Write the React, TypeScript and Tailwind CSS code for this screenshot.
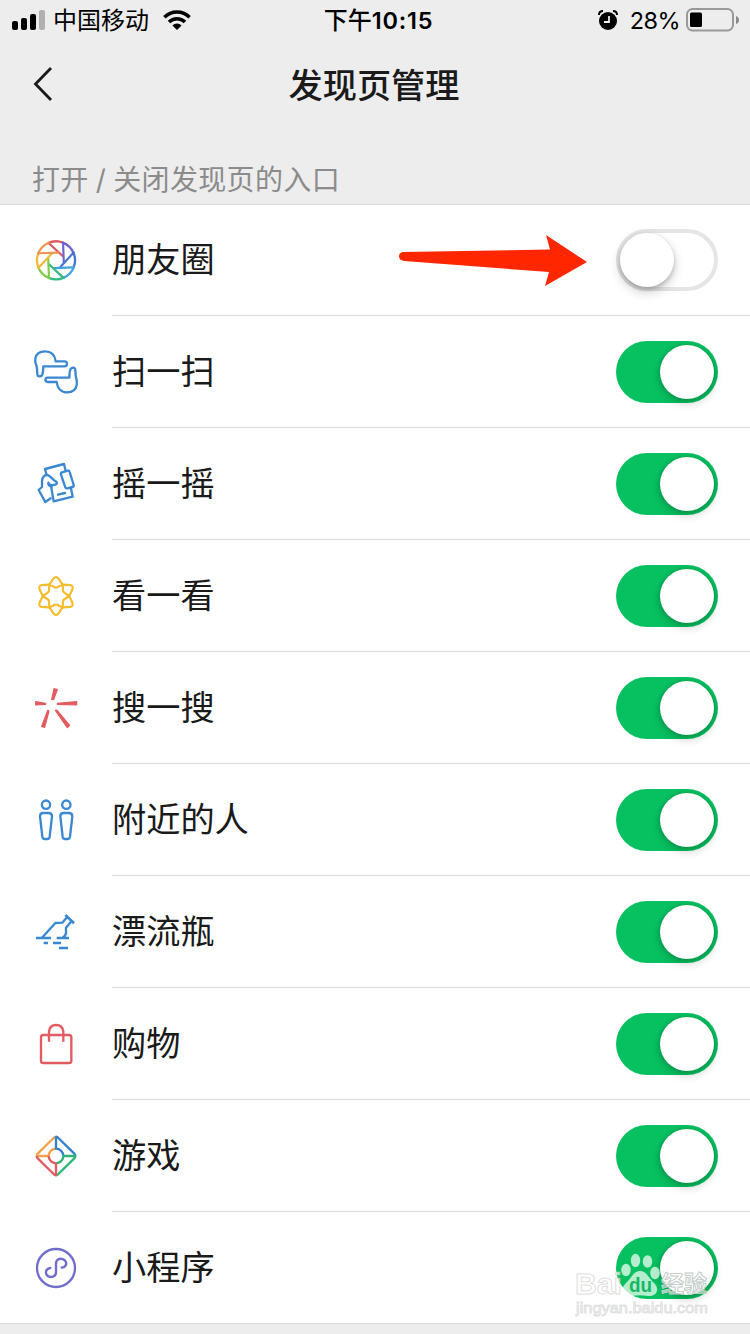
import type { ReactNode } from "react";

const BLUE = "#3a87d2";
const RED = "#e25b60";
const YELLOW = "#f5bd2b";

function Glyph({ top = 0, color = BLUE, children }: { top?: number; color?: string; children: ReactNode }) {
  return (
    <svg
      className="h-20 w-20 shrink-0"
      viewBox={`0 ${top} 240 240`}
      fill="none"
      stroke={color}
      strokeWidth={7}
      strokeLinecap="round"
      strokeLinejoin="round"
    >
      {children}
    </svg>
  );
}

const apertureColors = ["#dd5a62", "#6f63cf", "#4673cf", "#3fa4e0", "#35b985", "#7fcb45", "#f0b93a", "#ef9350"];

function MomentsIcon() {
  return (
    <Glyph top={2}>
      {apertureColors.map((c, i) => (
        <g key={c} stroke={c} transform={`rotate(${i * 45} 108 120)`}>
          <path d="M84.5 68 A57 57 0 0 1 129.8 67.3" />
          <path d="M87 69 L128 107" strokeWidth={6.5} />
        </g>
      ))}
    </Glyph>
  );
}

function ScanIcon() {
  return (
    <Glyph top={-9}>
      <path d="M53 122 C50 114 53 101 49 91 C45 82 45 75 46 70 C49 55 60 49 75 49 C95 49 105 61 107 79 L134 79 C143 79 143 94 134 94 L70 94 C69 101 71 113 66 121 C62 125 56 125 53 122 Z" />
      <path d="M165 101 C168 111 165 119 169 131 C171 137 171 143 170 151 C167 166 156 172 142 172 C124 172 112 160 110 141 L83 141 C74 141 74 128 83 128 L148 128 C149 119 147 110 152 102 C156 97 162 97 165 101 Z" />
    </Glyph>
  );
}

function ShakeIcon() {
  return (
    <Glyph top={327}>
      <path d="M79 418 L75 402 L132 387 L137 407" />
      <path d="M124 413 L143 407 Q148 406 149 411 L161 450 Q162 455 157 456 L142 460 Q137 461 136 457 L123 419 Q122 414 124 413 Z" />
      <path d="M95 455 C88 453 84 448 85 443 C88 449 97 452 106 449 C112 447 112 442 107 439 C99 434 92 424 83 420 C72 419 66 428 66 440 L66 456 L56 465 L76 501 L92 490" />
      <path d="M94 458 L101 499 L158 485 L153 460" />
      <path d="M114 479 L135 474" />
    </Glyph>
  );
}

function TopStoriesIcon() {
  return (
    <Glyph top={-12} color={YELLOW}>
      {[0, 60, 120, 180, 240, 300].map((a) => (
        <g key={a} transform={`rotate(${a} 108 108)`}>
          <path d="M88 74 L101 55 Q108 47 115 55 L128 74 Q119 77 113 81 Q108 84 103 81 Q97 77 88 74 Z" strokeWidth={6.5} />
        </g>
      ))}
    </Glyph>
  );
}

function SearchIcon() {
  return (
    <Glyph top={324} color={RED}>
      <g fill={RED} strokeWidth={3.5}>
        <path d="M102 386 L112 389 L101 419 L95 418 Z" />
        <path d="M47 425 L77 430 L77 433 L47 435 Z" />
        <path d="M112 430 L170 425 L170 435 L112 433 Z" />
        <path d="M83 451 L87 453 L74 502 L65 499 Z" />
        <path d="M106 451 L110 450 L149 496 L142 503 Z" />
      </g>
    </Glyph>
  );
}

function NearbyIcon() {
  return (
    <Glyph top={-15}>
      {[0, 61].map((dx) => (
        <g key={dx} transform={`translate(${dx} 0)`}>
          <circle cx={78} cy={59} r={12.5} />
          <path d="M68 84 H87 Q96 85 96 94 L89 155 Q88 162 82 162 H74 Q68 162 67 155 L60 94 Q60 85 68 84 Z" />
        </g>
      ))}
    </Glyph>
  );
}

function BottleIcon() {
  return (
    <Glyph top={321}>
      <g strokeLinecap="butt">
        <path d="M48 459 H93 M110 459 H147 M71 474 H84 M99 474 H123 M117 489 H144" strokeWidth={7} />
        <path d="M66 458 L106 414 L127 413 L141 397 M153 410 L138 428 V444 Q137 453 128 458" />
        <path d="M136 390 L162 415" strokeWidth={8} />
      </g>
    </Glyph>
  );
}

function ShoppingIcon() {
  return (
    <Glyph top={-18} color={RED}>
      <rect x={63} y={75} width={91} height={84} rx={7} />
      <path d="M87 95 V65 Q89 45 108 45 Q128 45 130 65 V95" strokeLinecap="butt" />
    </Glyph>
  );
}

function GamesIcon() {
  return (
    <Glyph top={318}>
      <g strokeLinecap="butt">
        <path d="M51 438 Q50 434 53 431 L101 384 Q105 380 108 380" stroke="#f0a14a" />
        <path d="M50 438 H86 A22 22 0 0 1 108 416" stroke="#f0a14a" />
        <path d="M108 380 Q112 380 115 384 L163 431 Q166 434 166 438" stroke="#3380cf" />
        <path d="M108 379 V416 A22 22 0 0 1 130 438" stroke="#3380cf" />
        <path d="M166 438 Q166 442 163 445 L115 492 Q112 496 108 496" stroke="#2db678" />
        <path d="M168 438 H130 A22 22 0 0 1 108 460" stroke="#2db678" />
        <path d="M108 496 Q104 496 101 492 L53 445 Q50 442 50 438" stroke={RED} />
        <path d="M108 497 V460 A22 22 0 0 1 86 438" stroke={RED} />
      </g>
    </Glyph>
  );
}

function MiniProgramIcon() {
  return (
    <Glyph top={-6} color="#716dcd">
      <circle cx={108} cy={114} r={57} />
      <path d="M125 113 C136 112 140 104 138 97 C135 87 123 84 115 88 C110 91 108 95 108 101 V127 C108 133 105 138 99 140 C90 143 79 138 78 129 C77 121 82 115 91 114" />
    </Glyph>
  );
}

const rows: { label: string; icon: ReactNode; on: boolean }[] = [
  { label: "朋友圈", icon: <MomentsIcon />, on: false },
  { label: "扫一扫", icon: <ScanIcon />, on: true },
  { label: "摇一摇", icon: <ShakeIcon />, on: true },
  { label: "看一看", icon: <TopStoriesIcon />, on: true },
  { label: "搜一搜", icon: <SearchIcon />, on: true },
  { label: "附近的人", icon: <NearbyIcon />, on: true },
  { label: "漂流瓶", icon: <BottleIcon />, on: true },
  { label: "购物", icon: <ShoppingIcon />, on: true },
  { label: "游戏", icon: <GamesIcon />, on: true },
  { label: "小程序", icon: <MiniProgramIcon />, on: true },
];

function Toggle({ on }: { on: boolean }) {
  return (
    <div
      role="switch"
      aria-checked={on}
      className={
        on
          ? "flex h-[62px] w-[102px] items-center justify-end rounded-full bg-[#07c160] p-1"
          : "flex h-[62px] w-[102px] items-center rounded-full border-4 border-[#e5e5e5] bg-white"
      }
    >
      <div
        className={
          on
            ? "h-[54px] w-[54px] rounded-full bg-white shadow-[0_4px_10px_rgba(0,0,0,0.2),0_0_4px_rgba(0,0,0,0.18)]"
            : "h-[54px] w-[54px] rounded-full bg-white shadow-[0_5px_12px_rgba(0,0,0,0.2),0_2px_4px_rgba(0,0,0,0.2)]"
        }
      />
    </div>
  );
}

function StatusBar() {
  return (
    <div className="grid h-10 grid-cols-3 items-center text-black">
      <div className="flex items-center pl-3">
        <svg className="h-5 w-[34px]" viewBox="0 0 34 20">
          <rect x="0" y="11" width="6" height="9" rx="2" />
          <rect x="9" y="8" width="6" height="12" rx="2" />
          <rect x="18" y="4" width="6" height="16" rx="2" />
          <rect x="27" y="0" width="6" height="20" rx="2" fill="#b0b0b0" />
        </svg>
        <span className="ml-[7px] pt-[2px] text-2xl leading-[38px] whitespace-nowrap">中国移动</span>
        <svg className="ml-[14px] h-5 w-7" viewBox="0 0 28 20" fill="none" stroke="#000" strokeWidth={3.6}>
          <path d="M1.4 7.2 A17.8 17.8 0 0 1 26.6 7.2" />
          <path d="M6 12 A11.4 11.4 0 0 1 22 12" />
          <path d="M14 20 L9.4 15.4 A6.5 6.5 0 0 1 18.6 15.4 Z" fill="#000" stroke="none" />
        </svg>
      </div>
      <div className="flex items-center justify-center pt-[2px] pl-[7px] whitespace-nowrap">
        <span className="text-2xl leading-[38px] font-medium">下午</span>
        <span className="text-[23.5px] leading-[38px] font-semibold tracking-[0.8px]">10:15</span>
      </div>
      <div className="flex items-center justify-end pr-[11px]">
        <svg className="h-5 w-5" viewBox="0 0 20 20">
          <circle cx="10" cy="11" r="9" />
          <path d="M1 5 Q1 1 5 1 M15 1 Q19 1 19 5" fill="none" stroke="#000" strokeWidth={2} />
          <path d="M11 6 V12 H6" fill="none" stroke="#ededed" strokeWidth={1.8} />
        </svg>
        <span className="ml-3 pt-[2px] text-[23.5px] leading-[38px] tracking-[-0.6px]">28%</span>
        <svg className="ml-[6px] h-6 w-[53px]" viewBox="0 0 53 24">
          <rect x="1" y="1" width="46" height="21.5" rx="5.5" fill="none" stroke="#999" strokeWidth={2} />
          <rect x="4" y="4.5" width="12" height="14.5" rx="1.5" />
          <path d="M50 8 Q53 9 53 12 Q53 15 50 16 Z" fill="#8a8a8a" />
        </svg>
      </div>
    </div>
  );
}

function Arrow() {
  return (
    <svg className="mt-[2px] mr-[27px] h-[52px] w-[190px]" viewBox="0 0 190 52">
      <path
        d="M4 17 L151 14.5 L147 0 L188 27 L146 51 L150 37 L5 26 Q0 25 0 21.5 Q0 17.5 4 17 Z"
        fill="#ff2600"
      />
    </svg>
  );
}

function Watermark() {
  return (
    <svg
      className="absolute right-[34px] bottom-[10px] h-[76px] w-[144px]"
      viewBox="0 0 144 76"
      fill="#ffffff"
      fillOpacity={0.7}
      stroke="#bdbdbd"
      strokeOpacity={0.5}
      strokeWidth={1}
    >
      <g stroke="none">
        <ellipse cx="54" cy="22" rx="4.7" ry="6.2" />
        <ellipse cx="63.5" cy="12.5" rx="4.7" ry="6.7" />
        <ellipse cx="75.5" cy="13.5" rx="4.7" ry="6.2" />
        <ellipse cx="83" cy="25" rx="4.8" ry="6.2" />
        <path d="M68 23 C75 23 77 31 83 36 C88 42 84 49 76 48 C70 47 65 47 60 48 C51 49 47 42 54 35 C60 30 61 23 68 23 Z" />
      </g>
      <g fontFamily="Liberation Sans" fontWeight="700">
        <text x="3" y="46" fontSize="29" textLength="47" lengthAdjust="spacingAndGlyphs">Bai</text>
        <text x="57" y="44" fontSize="20" fill="#16b862" fillOpacity={1} stroke="none" textLength="23" lengthAdjust="spacingAndGlyphs">du</text>
      </g>
      <text x="89" y="44" fontSize="23" fontWeight="700" fontFamily="Noto Sans CJK SC" fillOpacity={0.55} stroke="#c4cdc8" strokeOpacity={1}>经验</text>
      <text x="4" y="65" fontSize="14.5" fontFamily="Liberation Sans" stroke="#b5b5b5" strokeOpacity={0.42} textLength="132" lengthAdjust="spacingAndGlyphs">jingyan.baidu.com</text>
    </svg>
  );
}

export default function App() {
  return (
    <main className="relative flex h-[1334px] w-[750px] flex-col overflow-hidden bg-[#ededed] font-['Inter','Noto_Sans_CJK_SC',sans-serif] text-[#1a1a1a]">
      <StatusBar />
      <header className="grid h-[88px] grid-cols-3 items-center">
        <svg className="ml-[32px] h-9 w-6" viewBox="0 0 24 36" fill="none" stroke="#1a1a1a" strokeWidth={2.8}>
          <path d="M19 2 L3.5 18 L19 34" />
        </svg>
        <h1 className="-ml-[2px] pt-[3px] text-center text-[34.2px] leading-[50px] font-medium whitespace-nowrap">发现页管理</h1>
      </header>
      <div className="flex h-[76px] items-end px-8 pb-1">
        <p className="text-[28px] leading-10 tracking-[0.35px] [word-spacing:-1.2px] text-[#8b8b8b]">打开 / 关闭发现页的入口</p>
      </div>
      <section className="h-[1120px] shrink-0 border-y border-[#dadada] bg-white">
        {rows.map(({ label, icon, on }, i) => (
          <div key={label} className={i === 0 ? "flex h-[111px] pl-5" : "flex h-28 pl-5"}>
            <div className="flex w-[92px] items-center">{icon}</div>
            <div
              className={
                i === rows.length - 1
                  ? "flex flex-1 items-center pr-8"
                  : "flex flex-1 items-center border-b border-[#dadada] pr-8"
              }
            >
              <span className="flex-1 text-[34.2px] leading-[50px]">{label}</span>
              {!on && <Arrow />}
              <Toggle on={on} />
            </div>
          </div>
        ))}
      </section>
      <Watermark />
    </main>
  );
}
